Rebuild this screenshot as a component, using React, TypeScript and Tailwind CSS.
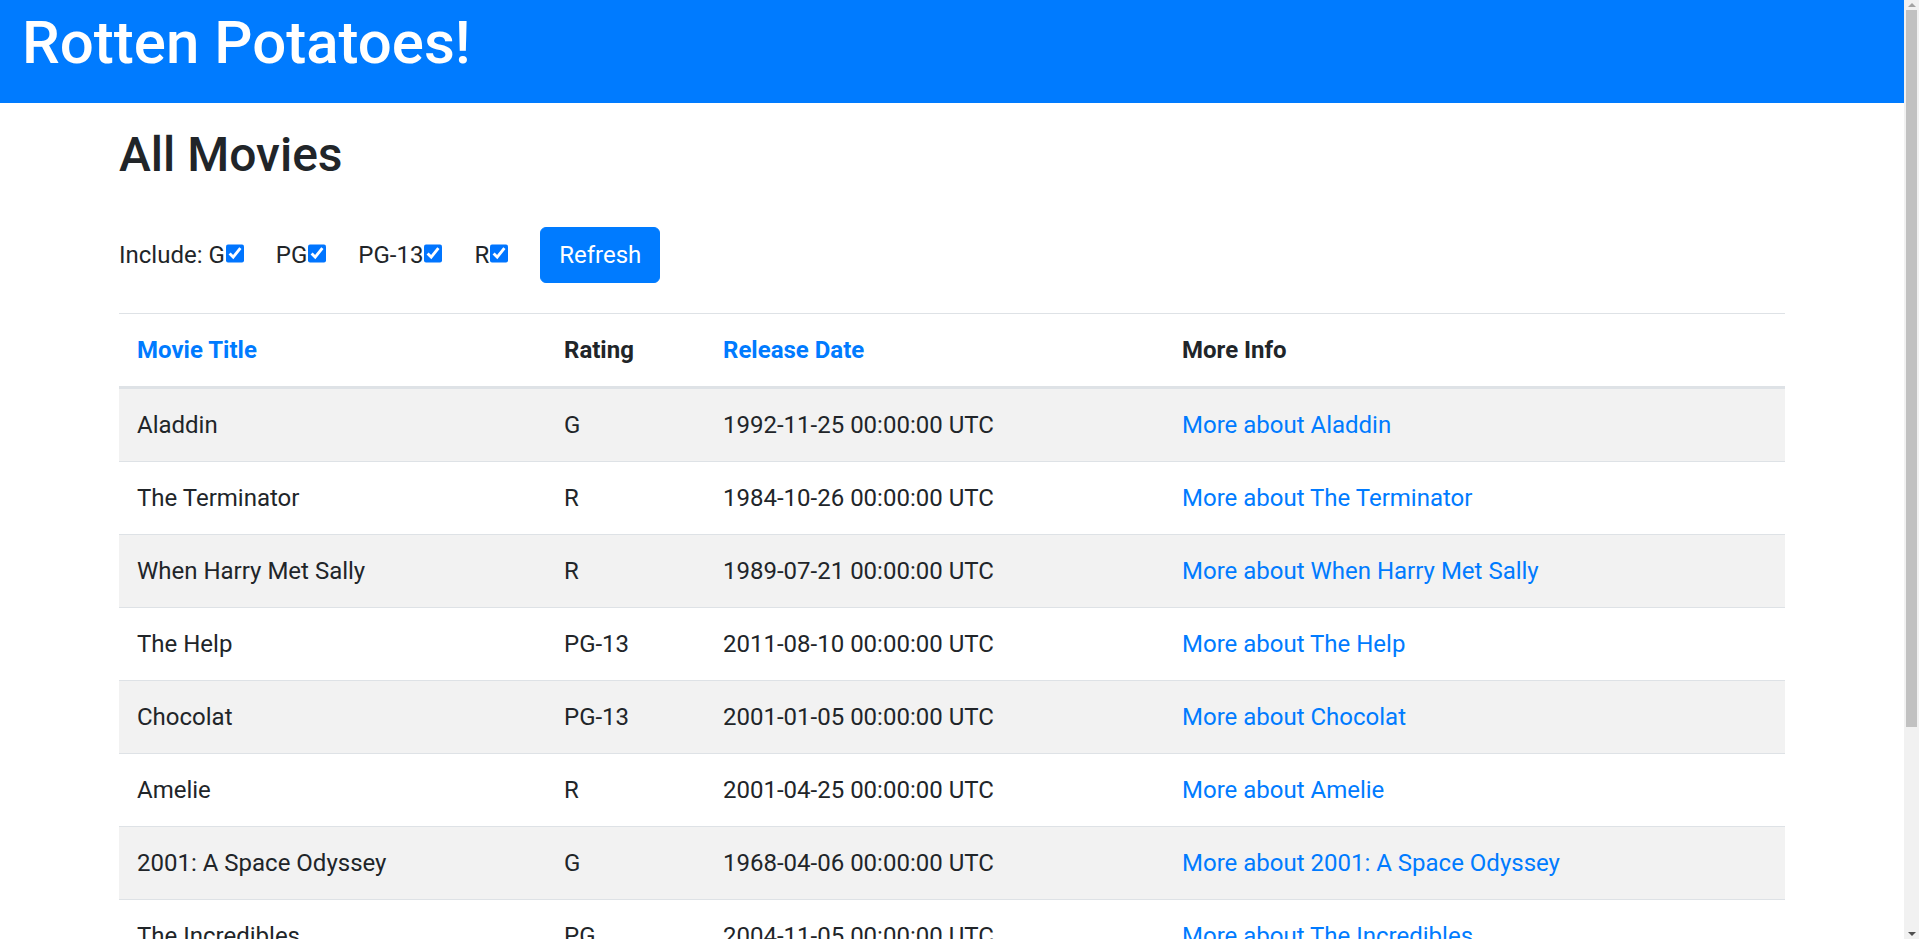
const movies = [
  { title: 'Aladdin', rating: 'G', date: '1992-11-25' },
  { title: 'The Terminator', rating: 'R', date: '1984-10-26' },
  { title: 'When Harry Met Sally', rating: 'R', date: '1989-07-21' },
  { title: 'The Help', rating: 'PG-13', date: '2011-08-10' },
  { title: 'Chocolat', rating: 'PG-13', date: '2001-01-05' },
  { title: 'Amelie', rating: 'R', date: '2001-04-25' },
  { title: '2001: A Space Odyssey', rating: 'G', date: '1968-04-06' },
  { title: 'The Incredibles', rating: 'PG', date: '2004-11-05' },
  { title: 'Raiders of the Lost Ark', rating: 'PG', date: '1981-06-12' },
  { title: 'Chicken Run', rating: 'G', date: '2000-06-21' },
];

const ratings = ['G', 'PG', 'PG-13', 'R'];

function Scrollbar() {
  return (
    <div className="flex h-full w-[15px] shrink-0 flex-col items-center bg-[#f1f1f1]">
      <div className="flex h-[10px] items-center justify-center">
        <div className="h-0 w-0 border-x-[4px] border-b-[4px] border-x-transparent border-b-[#a3a3a3]" />
      </div>
      <div className="h-[717px] w-[11px] bg-[#c1c1c1]" />
      <div className="flex-1" />
      <div className="flex h-[10px] items-center justify-center">
        <div className="h-0 w-0 border-x-[4px] border-t-[4px] border-x-transparent border-t-[#505050]" />
      </div>
    </div>
  );
}

export default function App() {
  return (
    <div className="flex h-screen overflow-hidden bg-white font-['Roboto','Liberation_Sans',sans-serif] text-[24px] leading-[36px] text-[#212529]">
      <div className="min-w-0 flex-1 overflow-hidden">
        {/* Header */}
        <div className="h-[103px] bg-[#007bff] pl-[22px] pt-[7px]">
          <h1 className="text-[60px] leading-[72px] font-medium text-white">Rotten Potatoes!</h1>
        </div>

        <div className="mx-auto max-w-[1710px] px-[22px] pb-[40px]">
          <h2 className="pt-[23px] text-[48px] leading-[57.6px] font-medium">All Movies</h2>

          {/* Filter form */}
          <form className="mt-[43px] flex items-center gap-[32px]">
            {ratings.map((r, i) => (
              <label key={r} className="flex items-baseline">
                <span>{i === 0 ? 'Include: ' + r : r}</span>
                <input
                  type="checkbox"
                  defaultChecked
                  className="ml-[1px] h-[19px] w-[18px] accent-[#0075ff]"
                />
              </label>
            ))}
            <button
              type="button"
              className="rounded-[6px] border border-[#007bff] bg-[#007bff] px-[18px] py-[9px] text-[24px] leading-[36px] text-white"
            >
              Refresh
            </button>
          </form>

          {/* Movies table */}
          <table className="mt-[30px] w-full table-fixed border-collapse text-left">
            <thead>
              <tr>
                <th className="w-[427px] border-t border-b-[3px] border-[#dee2e6] p-[18px] font-bold">
                  <a href="#" className="text-[#007bff]">Movie Title</a>
                </th>
                <th className="w-[159px] border-t border-b-[3px] border-[#dee2e6] p-[18px] font-bold">Rating</th>
                <th className="w-[459px] border-t border-b-[3px] border-[#dee2e6] p-[18px] font-bold">
                  <a href="#" className="text-[#007bff]">Release Date</a>
                </th>
                <th className="border-t border-b-[3px] border-[#dee2e6] p-[18px] font-bold">More Info</th>
              </tr>
            </thead>
            <tbody>
              {movies.map((m, i) => (
                <tr key={m.title} className={i % 2 === 0 ? 'bg-[#f2f2f2]' : 'bg-white'}>
                  <td className="border-t border-[#dee2e6] p-[18px]">{m.title}</td>
                  <td className="border-t border-[#dee2e6] p-[18px]">{m.rating}</td>
                  <td className="border-t border-[#dee2e6] p-[18px]">{m.date} 00:00:00 UTC</td>
                  <td className="border-t border-[#dee2e6] p-[18px]">
                    <a href="#" className="text-[#007bff]">More about {m.title}</a>
                  </td>
                </tr>
              ))}
            </tbody>
          </table>
        </div>
      </div>
      <Scrollbar />
    </div>
  );
}
